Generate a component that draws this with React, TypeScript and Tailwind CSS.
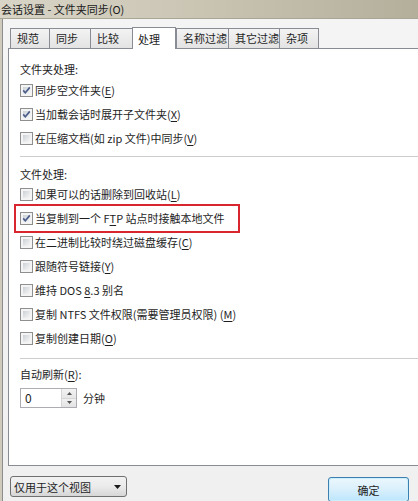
import React from "react";

const FONT = { fontFamily: '"Noto Sans CJK SC", "Noto Sans", sans-serif' };

function Box({ checked }: { checked: boolean }) {
  return (
    <span className="relative w-[13px] h-[13px] shrink-0 border border-[#8e8f8f] bg-[#f4f4f4] p-[2px] flex">
      <span className="flex-1 bg-gradient-to-br from-[#cdd1d6] to-[#f7f7f7]" />
      {checked && (
        <svg className="absolute left-0 top-0" width="11" height="11" viewBox="0 0 11 11">
          <path d="M2.2 5.4 L4.3 7.8 L8.8 2.4" stroke="#4b5f8c" strokeWidth="1.7" fill="none" />
        </svg>
      )}
    </span>
  );
}

function Row({ checked, children }: { checked: boolean; children: React.ReactNode }) {
  return (
    <div className="h-[24px] flex items-center gap-[2px]">
      <Box checked={checked} />
      <span className="leading-[16px] whitespace-nowrap">{children}</span>
    </div>
  );
}

const U = ({ children }: { children: React.ReactNode }) => (
  <span className="underline underline-offset-[2px] decoration-[1px]">{children}</span>
);

const tabs = [
  { t: "规范", w: 40 },
  { t: "同步", w: 42 },
  { t: "比较", w: 43 },
  { t: "处理", w: 44, sel: true },
  { t: "名称过滤", w: 53 },
  { t: "其它过滤", w: 52 },
  { t: "杂项", w: 40 },
];

export default function App() {
  return (
    <div
      className="w-[418px] h-[501px] overflow-hidden flex flex-col bg-[#f0f0f0] text-[11px] text-[#1e1e1e]"
      style={FONT}
    >
      {/* title bar */}
      <div className="h-[19px] shrink-0 flex items-center bg-gradient-to-r from-[#d9d5c7] via-[#c9c4b2] to-[#b4af9b] border-b border-[#a9a696]">
        <span className="pl-[1px] leading-[16px] text-[#1a1a1a]">会话设置 - 文件夹同步(O)</span>
      </div>
      {/* body with left frame */}
      <div className="flex-1 flex bg-[#cfcabb] pl-[2px]">
        <div className="flex-1 flex flex-col border-l border-[#8d8d8d] bg-gradient-to-b from-[#f4f4f4] to-[#f0f0f0] pl-[5px]">
          {/* tabs */}
          <div className="mt-[7px] h-[22px] flex items-end pl-[2px] relative z-10">
            {tabs.map((tab) =>
              tab.sel ? (
                <div
                  key={tab.t}
                  className="h-[22px] -mb-[1px] bg-white border border-b-0 border-[#898c95] flex items-start pt-[3px] pl-[5px] shrink-0"
                  style={{ width: tab.w }}
                >
                  {tab.t}
                </div>
              ) : (
                <div
                  key={tab.t}
                  className="h-[20px] -mr-[1px] bg-gradient-to-b from-[#f3f3f3] to-[#e3e3e3] border border-b-0 border-[#898c95] flex items-center pl-[6px] shrink-0"
                  style={{ width: tab.w }}
                >
                  {tab.t}
                </div>
              )
            )}
          </div>
          {/* panel */}
          <div className="relative h-[418px] shrink-0 bg-white border border-r-0 border-[#898c95] pl-[11px] pt-[12px] flex flex-col">
            <div className="leading-[16px]">文件夹处理:</div>
            <div className="mt-[1px]">
              <Row checked>
                同步空文件夹(<U>E</U>)
              </Row>
              <Row checked>
                当加载会话时展开子文件夹(<U>X</U>)
              </Row>
              <Row checked={false}>
                在压缩文档(如 zip 文件)中同步(<U>V</U>)
              </Row>
            </div>
            <div className="mt-[6px] h-[1px] bg-[#cdcdcd]" />
            <div className="mt-[9px] leading-[16px]">文件处理:</div>
            <div>
              <Row checked={false}>
                如果可以的话删除到回收站(<U>L</U>)
              </Row>
              <Row checked>
                当复制到一个 F<U>T</U>P 站点时接触本地文件
              </Row>
              <Row checked={false}>
                在二进制比较时绕过磁盘缓存(<U>C</U>)
              </Row>
              <Row checked={false}>
                跟随符号链接(<U>Y</U>)
              </Row>
              <Row checked={false}>
                维持 DOS <U>8</U>.3 别名
              </Row>
              <Row checked={false}>
                复制 NTFS 文件权限(需要管理员权限) (<U>M</U>)
              </Row>
              <Row checked={false}>
                复制创建日期(<U>O</U>)
              </Row>
            </div>
            <div className="mt-[8px] h-[1px] bg-[#cdcdcd]" />
            <div className="mt-[7px] leading-[16px]">
              自动刷新(<U>R</U>):
            </div>
            <div className="mt-[6px] flex items-center gap-[6px]">
              <div className="w-[57px] h-[20px] border border-[#abadb3] bg-white flex">
                <span className="flex-1 pl-[4px] leading-[18px] text-[12px]">0</span>
                <div className="w-[15px] flex flex-col border-l border-[#d6d6d6]">
                  <div className="flex-1 flex items-center justify-center bg-gradient-to-b from-[#f3f3f3] to-[#e6e6e6] border-b border-[#d6d6d6]">
                    <svg width="5" height="3" viewBox="0 0 5 3">
                      <path d="M0 3 L2.5 0 L5 3 Z" fill="#555" />
                    </svg>
                  </div>
                  <div className="flex-1 flex items-center justify-center bg-gradient-to-b from-[#f0f0f0] to-[#e3e3e3]">
                    <svg width="5" height="3" viewBox="0 0 5 3">
                      <path d="M0 0 L2.5 3 L5 0 Z" fill="#555" />
                    </svg>
                  </div>
                </div>
              </div>
              <span className="leading-[16px]">分钟</span>
            </div>
            {/* red annotation box */}
            <div className="absolute left-[5px] top-[155px] w-[226px] h-[29px] border-2 border-[#d9262e] pointer-events-none" />
          </div>
          {/* bottom */}
          <div className="mt-[10px] flex items-start justify-between pl-[2px] pr-[9px]">
            <div className="w-[117px] h-[21px] rounded-[3px] border border-[#707070] bg-gradient-to-b from-[#f2f2f2] via-[#ebebeb] to-[#d6d6d6] flex items-center pl-[3px] pr-[5px] justify-between">
              <span className="leading-[16px]">仅用于这个视图</span>
              <svg width="7" height="4" viewBox="0 0 7 4">
                <path d="M0 0 L7 0 L3.5 4 Z" fill="#1a1a1a" />
              </svg>
            </div>
            <div className="w-[81px] h-[25px] mt-[1px] rounded-[3px] border border-[#3c7fb1] p-[1px] bg-[#cdeefb]">
              <div className="w-full h-full rounded-[2px] bg-gradient-to-b from-[#eaf6fd] via-[#d9f0fc] to-[#bee6fd] flex items-center justify-center leading-[16px]">
                确定
              </div>
            </div>
          </div>
        </div>
      </div>
    </div>
  );
}
